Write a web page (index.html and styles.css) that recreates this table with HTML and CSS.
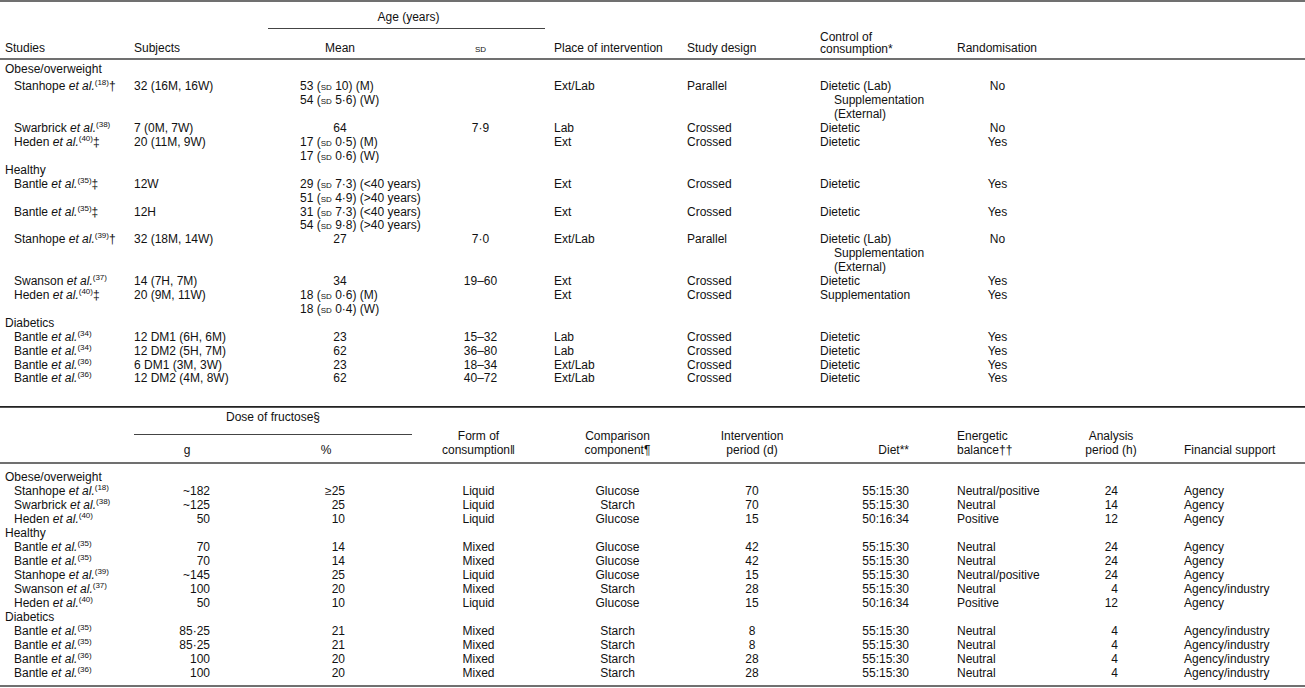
FILE: index.html
```html
<!DOCTYPE html>
<html lang="en">
<head>
    <meta charset="UTF-8">
    <title>Fructose intervention studies</title>
    <link rel="stylesheet" href="styles.css">
</head>
<body>
    <!-- characteristics of the studies -->
    <table class="data first-table">
        <colgroup>
            <col style="width:129px"><col style="width:139px"><col style="width:144px"><col style="width:137px">
            <col style="width:133px"><col style="width:133px"><col style="width:137px"><col style="width:91px"><col>
        </colgroup>
        <thead>
            <tr class="head-top">
                <th rowspan="2" class="bottom">Studies</th>
                <th rowspan="2" class="bottom">Subjects</th>
                <th colspan="2" class="span-head"><div class="span-label">Age (years)</div><div class="span-rule age-rule"></div></th>
                <th rowspan="2" class="bottom">Place of intervention</th>
                <th rowspan="2" class="bottom">Study design</th>
                <th rowspan="2" class="bottom two-line">Control of<br>consumption*</th>
                <th rowspan="2" class="bottom">Randomisation</th>
                <th rowspan="2"></th>
            </tr>
            <tr class="head-sub">
                <th class="c">Mean</th>
                <th class="c"><span class="sd">sd</span></th>
            </tr>
        </thead>
        <tbody>
            <tr class="group top"><td colspan="9">Obese/overweight</td></tr>
            <tr class="lead">
                <td class="ref">Stanhope <i>et al.</i><sup>(18)</sup>†</td>
                <td>32 (16M, 16W)</td>
                <td class="mean-list">53 (<span class="sd">sd</span> 10) (M)<br>54 (<span class="sd">sd</span> 5·6) (W)</td>
                <td></td>
                <td>Ext/Lab</td>
                <td>Parallel</td>
                <td>Dietetic (Lab)<span class="sub-line">Supplementation</span><span class="sub-line">(External)</span></td>
                <td class="c">No</td>
                <td></td>
            </tr>
            <tr>
                <td class="ref">Swarbrick <i>et al.</i><sup>(38)</sup></td>
                <td>7 (0M, 7W)</td>
                <td class="c">64</td>
                <td class="c">7·9</td>
                <td>Lab</td>
                <td>Crossed</td>
                <td>Dietetic</td>
                <td class="c">No</td>
                <td></td>
            </tr>
            <tr>
                <td class="ref">Heden <i>et al.</i><sup>(40)</sup>‡</td>
                <td>20 (11M, 9W)</td>
                <td class="mean-list">17 (<span class="sd">sd</span> 0·5) (M)<br>17 (<span class="sd">sd</span> 0·6) (W)</td>
                <td></td>
                <td>Ext</td>
                <td>Crossed</td>
                <td>Dietetic</td>
                <td class="c">Yes</td>
                <td></td>
            </tr>
            <tr class="group"><td colspan="9">Healthy</td></tr>
            <tr>
                <td class="ref">Bantle <i>et al.</i><sup>(35)</sup>‡</td>
                <td>12W</td>
                <td class="mean-list">29 (<span class="sd">sd</span> 7·3) (&lt;40 years)<br>51 (<span class="sd">sd</span> 4·9) (&gt;40 years)</td>
                <td></td>
                <td>Ext</td>
                <td>Crossed</td>
                <td>Dietetic</td>
                <td class="c">Yes</td>
                <td></td>
            </tr>
            <tr>
                <td class="ref">Bantle <i>et al.</i><sup>(35)</sup>‡</td>
                <td>12H</td>
                <td class="mean-list">31 (<span class="sd">sd</span> 7·3) (&lt;40 years)<br>54 (<span class="sd">sd</span> 9·8) (&gt;40 years)</td>
                <td></td>
                <td>Ext</td>
                <td>Crossed</td>
                <td>Dietetic</td>
                <td class="c">Yes</td>
                <td></td>
            </tr>
            <tr>
                <td class="ref">Stanhope <i>et al.</i><sup>(39)</sup>†</td>
                <td>32 (18M, 14W)</td>
                <td class="c">27</td>
                <td class="c">7·0</td>
                <td>Ext/Lab</td>
                <td>Parallel</td>
                <td>Dietetic (Lab)<span class="sub-line">Supplementation</span><span class="sub-line">(External)</span></td>
                <td class="c">No</td>
                <td></td>
            </tr>
            <tr>
                <td class="ref">Swanson <i>et al.</i><sup>(37)</sup></td>
                <td>14 (7H, 7M)</td>
                <td class="c">34</td>
                <td class="c">19–60</td>
                <td>Ext</td>
                <td>Crossed</td>
                <td>Dietetic</td>
                <td class="c">Yes</td>
                <td></td>
            </tr>
            <tr>
                <td class="ref">Heden <i>et al.</i><sup>(40)</sup>‡</td>
                <td>20 (9M, 11W)</td>
                <td class="mean-list">18 (<span class="sd">sd</span> 0·6) (M)<br>18 (<span class="sd">sd</span> 0·4) (W)</td>
                <td></td>
                <td>Ext</td>
                <td>Crossed</td>
                <td>Supplementation</td>
                <td class="c">Yes</td>
                <td></td>
            </tr>
            <tr class="group"><td colspan="9">Diabetics</td></tr>
            <tr>
                <td class="ref">Bantle <i>et al.</i><sup>(34)</sup></td>
                <td>12 DM1 (6H, 6M)</td>
                <td class="c">23</td>
                <td class="c">15–32</td>
                <td>Lab</td>
                <td>Crossed</td>
                <td>Dietetic</td>
                <td class="c">Yes</td>
                <td></td>
            </tr>
            <tr>
                <td class="ref">Bantle <i>et al.</i><sup>(34)</sup></td>
                <td>12 DM2 (5H, 7M)</td>
                <td class="c">62</td>
                <td class="c">36–80</td>
                <td>Lab</td>
                <td>Crossed</td>
                <td>Dietetic</td>
                <td class="c">Yes</td>
                <td></td>
            </tr>
            <tr>
                <td class="ref">Bantle <i>et al.</i><sup>(36)</sup></td>
                <td>6 DM1 (3M, 3W)</td>
                <td class="c">23</td>
                <td class="c">18–34</td>
                <td>Ext/Lab</td>
                <td>Crossed</td>
                <td>Dietetic</td>
                <td class="c">Yes</td>
                <td></td>
            </tr>
            <tr class="last">
                <td class="ref">Bantle <i>et al.</i><sup>(36)</sup></td>
                <td>12 DM2 (4M, 8W)</td>
                <td class="c">62</td>
                <td class="c">40–72</td>
                <td>Ext/Lab</td>
                <td>Crossed</td>
                <td>Dietetic</td>
                <td class="c">Yes</td>
                <td></td>
            </tr>
        </tbody>
    </table>

    <!-- dose and protocol -->
    <table class="data second-table">
        <colgroup>
            <col style="width:134px"><col style="width:106px"><col style="width:172px"><col style="width:133px"><col style="width:145px">
            <col style="width:124px"><col style="width:138px"><col style="width:108px"><col style="width:102px"><col>
        </colgroup>
        <thead>
            <tr class="head-top">
                <th rowspan="2"></th>
                <th colspan="2" class="span-head"><div class="span-label">Dose of fructose§</div><div class="span-rule dose-rule"></div></th>
                <th rowspan="2" class="bottom c two-line">Form of<br>consumption‖</th>
                <th rowspan="2" class="bottom c two-line">Comparison<br>component¶</th>
                <th rowspan="2" class="bottom c two-line">Intervention<br>period (d)</th>
                <th rowspan="2" class="bottom diet">Diet**</th>
                <th rowspan="2" class="bottom two-line">Energetic<br>balance††</th>
                <th rowspan="2" class="bottom c two-line">Analysis<br>period (h)</th>
                <th rowspan="2" class="bottom funding">Financial support</th>
            </tr>
            <tr class="head-sub">
                <th class="c">g</th>
                <th class="c">%</th>
            </tr>
        </thead>
        <tbody>
            <tr class="group top"><td colspan="10">Obese/overweight</td></tr>
            <tr><td class="ref">Stanhope <i>et al.</i><sup>(18)</sup></td><td class="grams">~182</td><td class="pct">≥25</td><td class="c">Liquid</td><td class="c">Glucose</td><td class="c">70</td><td class="diet">55:15:30</td><td>Neutral/positive</td><td class="hours">24</td><td class="funding">Agency</td></tr>
            <tr><td class="ref">Swarbrick <i>et al.</i><sup>(38)</sup></td><td class="grams">~125</td><td class="pct">25</td><td class="c">Liquid</td><td class="c">Starch</td><td class="c">70</td><td class="diet">55:15:30</td><td>Neutral</td><td class="hours">14</td><td class="funding">Agency</td></tr>
            <tr><td class="ref">Heden <i>et al.</i><sup>(40)</sup></td><td class="grams">50</td><td class="pct">10</td><td class="c">Liquid</td><td class="c">Glucose</td><td class="c">15</td><td class="diet">50:16:34</td><td>Positive</td><td class="hours">12</td><td class="funding">Agency</td></tr>
            <tr class="group"><td colspan="10">Healthy</td></tr>
            <tr><td class="ref">Bantle <i>et al.</i><sup>(35)</sup></td><td class="grams">70</td><td class="pct">14</td><td class="c">Mixed</td><td class="c">Glucose</td><td class="c">42</td><td class="diet">55:15:30</td><td>Neutral</td><td class="hours">24</td><td class="funding">Agency</td></tr>
            <tr><td class="ref">Bantle <i>et al.</i><sup>(35)</sup></td><td class="grams">70</td><td class="pct">14</td><td class="c">Mixed</td><td class="c">Glucose</td><td class="c">42</td><td class="diet">55:15:30</td><td>Neutral</td><td class="hours">24</td><td class="funding">Agency</td></tr>
            <tr><td class="ref">Stanhope <i>et al.</i><sup>(39)</sup></td><td class="grams">~145</td><td class="pct">25</td><td class="c">Liquid</td><td class="c">Glucose</td><td class="c">15</td><td class="diet">55:15:30</td><td>Neutral/positive</td><td class="hours">24</td><td class="funding">Agency</td></tr>
            <tr><td class="ref">Swanson <i>et al.</i><sup>(37)</sup></td><td class="grams">100</td><td class="pct">20</td><td class="c">Mixed</td><td class="c">Starch</td><td class="c">28</td><td class="diet">55:15:30</td><td>Neutral</td><td class="hours">4</td><td class="funding">Agency/industry</td></tr>
            <tr><td class="ref">Heden <i>et al.</i><sup>(40)</sup></td><td class="grams">50</td><td class="pct">10</td><td class="c">Liquid</td><td class="c">Glucose</td><td class="c">15</td><td class="diet">50:16:34</td><td>Positive</td><td class="hours">12</td><td class="funding">Agency</td></tr>
            <tr class="group"><td colspan="10">Diabetics</td></tr>
            <tr><td class="ref">Bantle <i>et al.</i><sup>(35)</sup></td><td class="grams">85·25</td><td class="pct">21</td><td class="c">Mixed</td><td class="c">Starch</td><td class="c">8</td><td class="diet">55:15:30</td><td>Neutral</td><td class="hours">4</td><td class="funding">Agency/industry</td></tr>
            <tr><td class="ref">Bantle <i>et al.</i><sup>(35)</sup></td><td class="grams">85·25</td><td class="pct">21</td><td class="c">Mixed</td><td class="c">Starch</td><td class="c">8</td><td class="diet">55:15:30</td><td>Neutral</td><td class="hours">4</td><td class="funding">Agency/industry</td></tr>
            <tr><td class="ref">Bantle <i>et al.</i><sup>(36)</sup></td><td class="grams">100</td><td class="pct">20</td><td class="c">Mixed</td><td class="c">Starch</td><td class="c">28</td><td class="diet">55:15:30</td><td>Neutral</td><td class="hours">4</td><td class="funding">Agency/industry</td></tr>
            <tr class="last"><td class="ref">Bantle <i>et al.</i><sup>(36)</sup></td><td class="grams">100</td><td class="pct">20</td><td class="c">Mixed</td><td class="c">Starch</td><td class="c">28</td><td class="diet">55:15:30</td><td>Neutral</td><td class="hours">4</td><td class="funding">Agency/industry</td></tr>
        </tbody>
    </table>
</body>
</html>
```

FILE: styles.css
```css
* {
    margin: 0;
    padding: 0;
    box-sizing: border-box;
}

body {
    font-family: "Liberation Sans", Arial, sans-serif;
    font-size: 12px;
    color: #111;
    background: white;
    width: 1305px;
}

.data {
    width: 1305px;
    border-collapse: collapse;
    table-layout: fixed;
}

.data th,
.data td {
    font-weight: normal;
    text-align: left;
    vertical-align: top;
    line-height: 14px;
    padding: 0 0 0 5px;
    white-space: nowrap;
}

.data .c {
    text-align: center;
    padding-left: 0;
}

.data thead th.bottom {
    vertical-align: bottom;
    padding-bottom: 3px;
}

.span-head {
    text-align: center !important;
    padding-left: 0 !important;
}

.span-rule {
    height: 1px;
    background: #444;
}

.sd {
    font-variant: small-caps;
    font-size: 11px;
}

sup {
    font-size: 8px;
    line-height: 0;
    vertical-align: 5px;
}

i {
    font-style: italic;
}

.ref {
    padding-left: 14px !important;
}

.sub-line {
    display: block;
    padding-left: 14px;
}

.group.top td {
    padding-top: 3px;
}

/* first table: study characteristics */
.first-table {
    border-top: 2px solid #707070;
    border-bottom: 1px solid #222;
}

.first-table thead {
    border-bottom: 2px solid #707070;
}

.first-table thead th.two-line {
    line-height: 12px;
}

.first-table .head-top .span-head {
    padding-top: 8px;
}

.first-table .age-rule {
    margin-top: 4px;
    margin-right: 4px;
}

.first-table .head-sub th {
    padding-top: 12px;
    padding-bottom: 3px;
}

.first-table tbody td {
    line-height: 13.9px;
}

.first-table .lead td {
    padding-top: 3.5px;
}

.first-table .mean-list {
    padding-left: 32px;
}

.first-table .last td {
    padding-bottom: 20px;
}

/* second table: dose and protocol */
.second-table {
    border-top: 1px solid #555;
    border-bottom: 2px solid #707070;
}

.second-table thead {
    border-bottom: 2px solid #707070;
}

.second-table thead th.bottom {
    padding-bottom: 5px;
}

.second-table .head-top .span-head {
    padding-top: 2px;
}

.second-table .dose-rule {
    margin-top: 10px;
}

.second-table .head-sub th {
    padding-top: 8px;
    padding-bottom: 5px;
}

.second-table .group.top td {
    padding-top: 6px;
}

.second-table .last td {
    padding-bottom: 5px;
}

.data .grams {
    text-align: right;
    padding-right: 30px;
}

.data .pct {
    text-align: right;
    padding-right: 67px;
}

.data .diet {
    text-align: right;
    padding-right: 43px;
}

.data .hours {
    text-align: right;
    padding-right: 44px;
}

.data .funding {
    padding-left: 22px;
}
```
